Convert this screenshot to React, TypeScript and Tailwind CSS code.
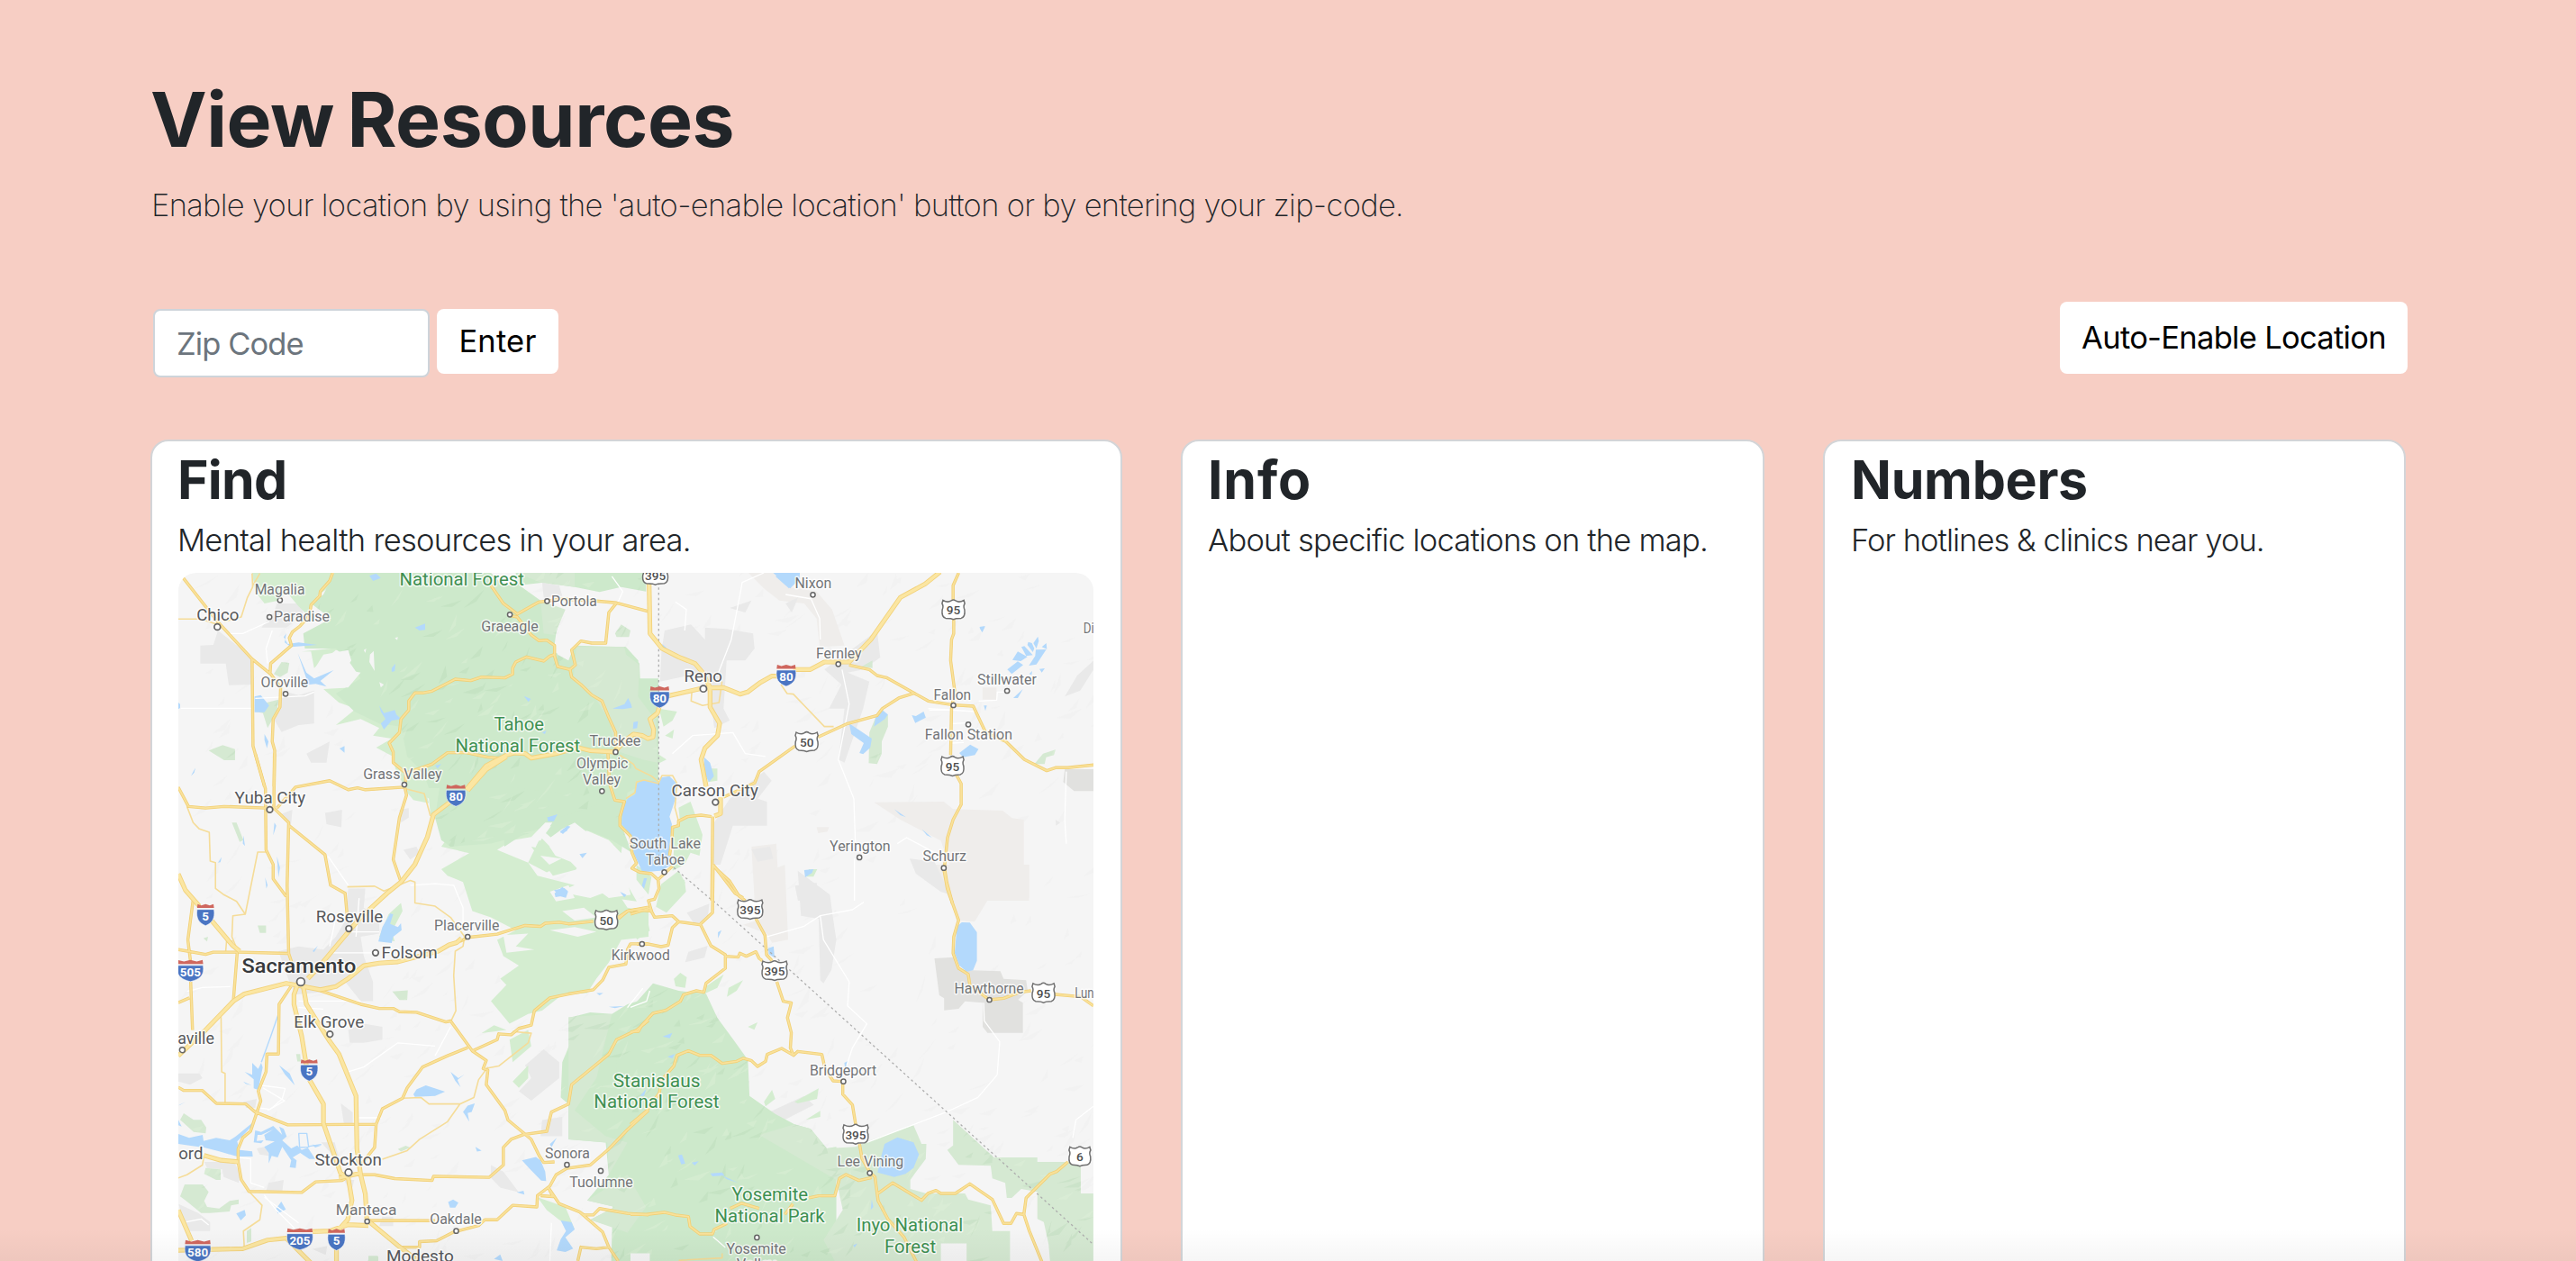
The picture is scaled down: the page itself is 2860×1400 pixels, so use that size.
import type { ReactNode } from "react";

/* Map tiles: each tile has its own local grid that is scaled onto the map. */
type Tile = "nw" | "ne" | "sw" | "se" | "c" | "f" | "d";

const TILES: Record<Tile, [number, number, number, number]> = {
  nw: [-18, -166, 0.3444, 0.3333],
  ne: [502, -36, 0.3444, 0.3333],
  sw: [-18, 204, 0.3444, 0.3571],
  se: [502, 324, 0.3571, 0.3333],
  c: [382, 4, 0.3333, 0.3333],
  f: [822, 4, 0.3333, 0.3333],
  d: [-8, 544, 0.3333, 0.3333],
};

const at = (t: Tile, x: number, y: number): [number, number] => {
  const [ox, oy, sx, sy] = TILES[t];
  return [ox + x * sx, oy + y * sy];
};

const matrix = (t: Tile) => {
  const [ox, oy, sx, sy] = TILES[t];
  return `translate(${ox} ${oy}) scale(${sx} ${sy})`;
};

type Shape = [Tile, string];

const GREEN_LIGHT: Shape[] = [
  ["nw", "M290,498 L550,498 L545,540 L500,575 L470,640 L440,610 L400,560 L375,590 L330,600 L300,560Z"],
  ["nw", "M450,760 L640,740 L750,1000 L900,1100 L880,1170 L780,1170 L745,1110 L690,1080 L740,1050 L680,1040 L700,1015 L640,985 L560,1005 L625,950 L570,930 L520,885 L610,880 L580,850 L640,830 L630,775 L560,755 L490,815 L480,760Z"],
  ["sw", "M740,0 L1600,0 L1600,150 L1500,150 L1480,300 L1440,260 L1370,230 L1300,260 L1250,200 L1220,250 L1190,250 L1130,260 L1080,290 L1180,330 L1210,370 L1330,400 L1280,420 L1380,440 L1460,410 L1500,470 L1568,480 L1568,560 L1480,570 L1440,640 L1400,690 L1370,735 L1290,740 L1225,790 L1180,800 L1120,830 L1060,760 L1110,710 L1090,690 L1150,650 L1100,620 L1080,570 L1140,540 L1060,500 L1000,480 L970,390 L920,370 L900,350 L990,300 L900,280 L930,240 L890,225 L905,190 L865,180 L860,130 L790,100 L760,60Z"],
  ["sw", "M1220,250 L1300,330 L1240,360 L1180,330Z M1190,280 L1290,300 L1340,350 L1260,370Z M1400,300 L1470,330 L1440,360 L1390,330Z M1420,380 L1500,400 L1530,450 L1450,440Z"],
  ["sw", "M780,100 L850,110 L860,145 L810,135Z M700,560 L730,490 L770,455 L775,480 L740,545 L750,575Z M1030,860 L1070,835 L1110,850Z M1120,880 L1180,850 L1190,900 L1130,950Z M1130,1010 L1180,960 L1180,1000 L1150,1030Z M1210,1370 L1300,1400 L1330,1470 L1280,1440 L1240,1410Z"],
  ["c", "M520,770 L560,750 L600,860 L590,930 L560,920 L540,960 L500,980 L505,900 L500,840 L525,815Z M455,440 L515,450 L500,480 L470,500Z M475,530 L505,510 L500,540Z M450,590 L480,610 L450,625Z M460,1030 L540,1010 L545,1050 L480,1120 L445,1100Z M380,960 L430,1000 L420,1060 L380,1010Z"],
  ["se", "M0,190 L50,170 L60,220 L20,250Z M95,65 L150,20 L170,60 L140,110 L90,140Z M135,380 L155,360 L175,375 L170,410 L140,405Z M235,405 L290,365 L270,410 L230,430Z M305,410 L350,385 L330,420 L300,440Z M365,540 L395,525 L385,550Z M415,790 L440,750 L450,780 L420,805Z M510,790 L585,745 L580,780 L520,795Z M545,850 L590,820 L590,840Z"],
  ["ne", "M240,760 L280,760 L280,800 L250,805Z M575,1095 L602,1095 L590,1120 L565,1120Z"],
];

const GREEN: Shape[] = [
  ["nw", "M555,498 L1060,498 L1100,540 L1145,535 L1220,590 L1290,625 L1270,700 L1262,760 L1330,800 L1350,745 L1495,745 L1535,790 L1535,850 L1600,850 L1600,1215 L860,1215 L840,1160 L790,1110 L770,1010 L700,1000 L620,960 L560,900 L640,850 L600,790 L560,750 L460,750 L455,700 L545,650 L480,600 L520,570Z"],
  ["nw", "M1140,498 L1560,498 L1560,560 L1480,545 L1410,562 L1330,545 L1230,530 L1145,540Z"],
  ["c", "M-60,560 L300,560 L420,540 L450,600 L440,670 L350,720 L330,830 L365,920 L300,880 L230,850 L150,830 L120,890 L60,840 L0,860 L-60,900Z"],
  ["sw", "M880,190 L900,60 L1100,-20 L1420,0 L1400,150 L1250,200 L1180,240 L1060,270 L930,280 L900,260Z"],
  ["c", "M-60,380 L-60,250 L110,300 L180,230 L340,235 L390,290 L395,420 L440,480 L445,620 L430,670 L300,740 L-60,700Z"],
  ["sw", "M1320,810 L1380,795 L1450,800 L1500,770 L1600,740 L1600,1590 L1490,1540 L1480,1470 L1380,1440 L1460,1400 L1370,1380 L1440,1300 L1430,1200 L1310,1190 L1310,1080 L1285,1060 L1290,950 L1320,880Z"],
  ["se", "M-40,510 L0,480 L70,395 L150,420 L235,430 L270,510 L325,590 L365,650 L370,770 L450,830 L510,865 L560,880 L610,945 L640,940 L640,1330 L-60,1330Z"],
];

const GREEN_GREY: Shape[] = [
  ["c", "M180,235 L340,235 L345,260 L390,295 L385,400 L445,480 L450,620 L400,610 L310,580 L290,480 L240,400 L170,340Z"],
  ["nw", "M1145,498 L1330,498 L1330,545 L1220,530Z M1460,700 L1480,670 L1510,690 L1505,712 L1465,712Z M1220,590 L1300,620 L1265,705 L1230,700Z"],
  ["se", "M400,900 L510,865 L560,880 L610,945 L700,940 L740,920 L880,868 L905,930 L920,930 L918,980 L890,1020 L870,1050 L870,1080 L920,1095 L1040,1095 L1050,1115 L1120,1135 L1125,1220 L1180,1220 L1180,1330 L640,1330 L600,1250 L660,1150 L640,1050Z"],
  ["se", "M1003,850 L1130,975 L1265,975 L1265,990 L1375,990 L1400,1005 L1400,1095 L1439,1095 L1439,1330 L1305,1330 L1300,1265 L1285,1190 L1265,1180 L1265,1090 L1215,1080 L1185,1110 L1170,1110 L1165,1060 L1125,1045 L1120,1003 L1020,1000 L985,950 L1003,935Z"],
  ["ne", "M745,420 L780,400 L780,425Z M790,590 L830,580 L830,620 L810,670 L810,710 L795,745 L768,742 L770,640Z M1302,745 L1330,710 L1370,697 L1365,715 L1340,722 L1335,745Z"],
  ["nw", "M360,835 L385,795 L410,798 L405,830 L380,845Z M300,940 L375,920 L370,960 L340,1015 L325,965 L300,960Z M150,1090 L195,1072 L235,1085 L235,1122 L200,1122Z"],
  ["sw", "M225,205 L240,205 L262,260 L250,265Z M308,525 L335,525 L335,548 L315,548Z M742,730 L792,727 L790,757 L765,757Z M133,565 L148,560 L145,575Z M432,925 L445,925 L447,948 L436,948Z"],
  ["d", "M30,190 L42,168 L75,190 L100,190 L117,215 L115,235 L75,230Z M115,350 L165,355 L165,390 L150,390 L110,370Z M30,445 L45,405 L105,405 L125,430 L110,460 L120,480 L160,485 L195,460 L225,455 L225,470 L200,475 L195,495 L130,500 L100,500 L50,460Z M252,560 L267,550 L267,595 L252,600Z M660,645 L690,645 L690,662 L655,662Z"],
  ["sw", "M760,1220 L785,1210 L800,1215 L770,1228Z M665,1552 L695,1552 L695,1568 L665,1568Z"],
  ["sw", "M1310,1190 L1310,810 L1450,800 L1400,1000 L1330,1100 L1430,1180 L1500,1200 L1440,1300 L1435,1200Z M1370,1380 L1500,1300 L1560,1400 L1500,1480 L1380,1440 L1460,1400Z"],
];

const LAND: Shape[] = [
  ["se", "M965,1262 h80 v70 h-80Z M0,1295 h60 v40 h-60Z"],
  ["nw", "M520,770 L600,755 L610,790 L590,820 L640,830 L600,880 L520,880 L560,850 L490,820Z M650,755 L658,750 L655,765Z M670,770 L682,758 L685,825 L668,795Z M750,715 L760,712 L758,722Z M700,862 L715,870 L705,880Z"],
  ["nw", "M1305,625 L1400,600 L1460,600 L1435,735 L1350,728 L1325,750 L1310,790 L1275,770 L1270,720Z"],
  ["sw", "M1190,250 L1235,205 L1258,205 L1220,260Z M1240,260 L1290,225 L1330,205 L1370,235 L1350,290 L1310,280 L1270,300Z M1350,260 L1450,270 L1480,330 L1510,430 L1440,440 L1370,390 L1320,380 L1340,340Z M1250,420 L1310,400 L1330,440 L1270,450Z M1290,480 L1360,470 L1400,500 L1330,510Z M1250,540 L1330,530 L1400,545 L1340,560Z M1100,555 L1180,550 L1140,590 L1200,600 L1110,610Z M1350,300 L1300,320 L1350,330Z"],
  ["c", "M40,880 L70,835 L95,832 L60,880Z M90,900 L150,840 L190,870 L160,950 L110,930Z M170,900 L300,910 L340,960 L360,1060 L300,1030 L280,980 L230,1000 L180,950Z M60,930 L130,940 L90,960Z"],
];

const URBAN: Shape[] = [
  ["nw", "M180,690 L290,780 L290,870 L215,872 L205,800 L123,800 L123,740 L165,738Z M385,890 L440,905 L490,890 L490,1000 L440,1005 L385,1028 L360,985 L380,950Z M370,600 L450,600 L455,640 L400,680 L320,680 L360,630Z M465,1100 L540,1060 L530,1130 L480,1130Z M1225,530 L1280,540 L1290,575 L1230,580Z"],
  ["ne", "M110,300 L195,280 L240,330 L240,290 L310,295 L395,310 L400,360 L370,400 L310,400 L300,560 L320,600 L270,625 L255,500 L230,440 L95,470 L100,370Z M320,860 L430,770 L455,800 L410,860 L440,870 L440,950 L330,950 L290,1080 L260,1080 L270,940Z M625,430 L730,350 L795,300 L805,390 L750,430 L700,440 L770,470 L750,560 L690,740 L670,730 L690,560 L640,560 L680,480Z M390,1030 L450,1020 L460,1060 L410,1070Z M530,1150 L600,1140 L605,1200 L540,1200Z M320,225 L390,200 L370,240Z"],
  ["ne", "M1400,520 L1440,450 L1493,400 L1493,430 L1450,500Z M1370,930 L1385,940 L1372,950Z M900,1060 L980,1070 L1030,1180 L1000,1170 L920,1110Z M500,210 L540,190 L520,240Z"],
  ["sw", "M375,605 L440,590 L520,600 L560,560 L590,510 L600,410 L655,410 L650,470 L700,500 L700,550 L640,560 L650,620 L680,700 L680,760 L640,760 L590,700 L540,730 L430,740 L410,700Z M380,180 L420,165 L415,215Z M525,175 L580,165 L578,220 L530,210Z M778,290 L820,280 L830,300 L800,320Z M765,165 L795,160 L795,190 L770,205Z M600,850 L650,830 L710,840 L710,880 L650,890 L605,890Z M52,985 L120,985 L130,1000 L90,1020 L52,1010Z M1170,960 L1230,910 L1280,950 L1280,1000 L1190,1070 L1150,1040 L1190,1000Z M1060,1270 L1100,1290 L1150,1355 L1090,1340 L1060,1310Z M1225,1130 L1290,1120 L1290,1180 L1220,1180Z M710,1430 L745,1430 L745,1460 L700,1460Z"],
  ["d", "M110,330 L210,330 L230,370 L225,400 L175,380 L170,355 L120,350Z M240,130 L285,120 L280,150 L250,150Z M325,400 L375,390 L370,430 L315,430Z M285,285 L320,278 L325,310 L295,305Z M565,135 L605,165 L605,205 L575,200Z M500,265 L545,265 L560,320 L540,310Z M575,390 L610,390 L600,430Z M25,470 L90,500 L130,530 L130,560 L50,560Z M470,620 L520,610 L515,640Z"],
  ["se", "M520,20 L570,60 L620,100 L630,180 L640,250 L625,350 L600,395 L590,385 L585,180 L530,170Z M175,160 L245,130 L240,180 L200,200Z M180,290 L240,270 L230,310 L170,325Z M400,830 L440,820 L540,770 L570,800 L460,860Z M320,730 L370,720 L360,760Z"],
];

const BEIGE: Shape[] = [
  ["ne", "M380,108 L460,108 L510,155 L600,170 L650,230 L690,350 L610,355 L600,260 L560,210 L480,200 L430,160Z M785,872 L1010,870 L1040,895 L1200,900 L1230,925 L1268,930 L1268,1100 L1285,1105 L1285,1200 L1060,1200 L1040,1110 L1000,1000 L870,930Z M1135,490 h45 v40 h-45Z M390,1020 L470,1010 L480,1190 L400,1200Z M600,955 L640,955 L635,970 L605,975Z"],
  ["se", "M905,0 L1240,0 L1240,110 L1115,110 L1070,190 L1020,185 L980,90 L920,50Z M410,30 L480,0 L490,250 L440,260 L425,230 L350,200 L410,180Z"],
];

const BASE_GREY: Shape[] = [
  ["se", "M945,312 L1005,308 L1020,350 L1150,355 L1160,380 L1230,385 L1235,420 L1205,450 L1220,460 L1220,560 L1110,560 L1095,540 L1095,460 L1040,455 L1020,480 L975,485 L975,445 L960,435Z"],
  ["ne", "M1400,762 L1493,762 L1493,835 L1430,835 L1395,805Z"],
];

const WATER: Shape[] = [
  ["c", "M380,690 L400,678 L440,682 L455,690 L462,670 L490,665 L515,690 L510,740 L490,800 L498,825 L490,900 L500,960 L460,980 L400,985 L370,920 L365,870 L330,825 L335,770 L350,740 L375,725Z M605,602 L625,620 L638,665 L622,685 L608,660Z M300,440 L340,425 L352,405 L362,425 L365,437 L335,442Z M370,485 L385,482 L382,505 L368,508Z M465,225 L480,238 L470,245Z M5,398 L28,408 L20,418Z M65,520 L80,513 L75,525Z M83,803 L115,793 L105,815 L85,815Z M125,850 L150,830 L160,833 L135,858Z M190,925 L215,920 L200,938Z M105,1045 L140,1038 L152,1050 L145,1070 L125,1065Z M325,1050 L345,1060 L340,1068Z M405,1005 L415,1005 L405,1040 L398,1030Z"],
  ["c", "M843,0 L900,-30 L900,25 L888,40Z"],
  ["ne", "M460,108 L546,108 L545,128 L515,160Z M705,610 L735,630 L778,660 L773,690 L750,712 L738,708 L752,675 L712,645Z M785,620 L790,590 L812,565 L830,580 L820,595Z M907,582 L920,585 L945,570 L952,590 L918,608Z M1060,708 L1095,680 L1122,695 L1110,715 L1072,722Z M1125,288 L1143,285 L1133,305Z M560,1098 L590,1095 L585,1108 L563,1122Z M850,895 L888,922 L870,915Z M940,962 L972,990 L955,982Z"],
  ["f", "M295,310 L330,283 L348,295 L310,325Z M312,278 L330,250 L362,268 L340,282Z M342,235 L352,232 L380,262 L358,265Z M365,218 L377,222 L385,240 L380,252 L362,228Z M382,222 L397,200 L400,215 L392,240Z M390,244 L425,243 L392,293 L367,297 L388,265Z M410,235 L425,222 L427,242Z M402,308 L420,306 L410,320Z M368,325 L378,315 L376,328Z M315,405 L347,375 L330,405Z M217,430 L227,430 L222,448Z M203,172 L221,167 L212,186Z"],
  ["nw", "M437,765 L465,830 L490,850 L553,822 L510,858 L530,877 L495,868 L455,872 L465,850Z M400,700 L395,730 L415,745 L500,738 L440,730 L405,735 L392,712Z M298,910 L318,905 L345,940 L330,962 L298,962Z M700,940 L715,965 L750,955 L755,970 L770,985 L740,990 L715,1020 L705,1000 L720,985 L705,960Z M740,815 L752,800 L750,825 L740,828Z M815,680 L848,667 L848,688 L830,690Z M668,508 L690,500 L705,515 L680,525Z M572,1083 L588,1075 L588,1097Z M330,1035 L343,1060 L338,1082 L330,1055Z M95,1172 L108,1148 L102,1165Z M52,930 L58,935 L58,948 L52,952Z M880,1140 L900,1135 L888,1150Z"],
  ["sw", "M697,575 L710,530 L735,488 L745,490 L735,520 L760,530 L770,518 L772,540 L745,560 L740,580Z M810,1050 L820,1035 L850,1022 L890,1035 L912,1042 L880,1055 L815,1058Z M930,980 L955,1000 L975,988 L952,1005 L962,1028 L945,1008Z M970,1105 L985,1085 L1008,1078 L998,1105 L985,1108 L990,1135 L975,1112Z M1160,1255 L1205,1245 L1220,1255 L1235,1290 L1238,1320 L1222,1318 L1188,1285Z M1285,1442 L1320,1448 L1330,1470 L1300,1495 L1325,1530 L1300,1540 L1272,1535 L1285,1500 L1302,1475Z M1010,1213 L1030,1225 L1015,1228Z M1143,1355 L1165,1350 L1168,1362Z M922,1385 L938,1377 L955,1387 L945,1402 L928,1402Z M1265,425 L1290,405 L1308,418 L1300,432 L1268,437Z M1240,190 L1275,180 L1262,198Z M1283,238 L1310,215 L1305,232Z M1400,735 L1422,735 L1410,742Z M1070,1562 L1090,1548 L1098,1568Z M1440,778 L1490,776 L1460,782Z M180,330 L192,312 L188,328Z M332,375 L340,400 L336,410Z M370,310 L380,345 L375,375Z M362,205 L368,215 L358,245Z M262,245 L267,278 L260,270Z M93,60 L107,35 L103,50Z M485,605 L502,588 L490,608Z M1250,1205 L1272,1185 L1255,1215Z M1480,425 L1497,430 L1490,437Z"],
  ["d", "M270,0 L290,20 L300,0 L305,15 L290,90 L275,85 L275,55 L245,30 L270,40Z M240,62 L268,75 L248,70Z M360,8 L395,35 L412,75 L380,40Z M24,237 L60,250 L105,240 L108,260 L150,250 L195,258 L215,245 L270,200 L272,208 L220,262 L228,290 L270,295 L272,312 L220,312 L160,295 L110,282 L60,275 L24,270Z M24,190 L35,212 L24,208Z M24,142 L48,130 L30,140Z M275,265 L280,225 L300,230 L340,210 L370,240 L360,212 L375,220 L385,245 L370,258 L400,285 L420,275 L435,290 L455,282 L480,320 L460,320 L430,300 L405,315 L418,325 L415,350 L395,348 L400,325 L370,280 L355,315 L335,310 L325,335 L325,300 L310,280 L345,262 L315,258 L310,240 L340,222 L300,240 L288,240 L285,260 L308,258 L300,268Z M350,485 L367,462 L382,488 L355,502Z M217,502 L245,490 L249,508 L232,525Z M470,272 L500,275 L480,282Z"],
  ["se", "M768,1025 L775,990 L790,930 L830,908 L880,925 L897,965 L880,1010 L855,1030 L820,1040Z M1015,205 L1030,192 L1055,193 L1077,225 L1077,320 L1065,352 L1045,356 L1022,335 L1008,295Z M428,278 L445,272 L448,310 L430,298Z M100,572 L130,560 L122,578Z M115,640 L138,630 L130,645Z M30,770 L50,745 L42,770Z M148,968 L160,965 L170,995 L158,998Z M190,992 L212,988 L200,1002Z M248,1028 L285,1025 L292,1035 L255,1038Z M750,1115 L755,1140 L747,1150Z M692,1268 L705,1262 L697,1275Z M665,660 L675,655 L668,690Z M272,225 L283,218 L272,245Z M285,1035 L335,1060 L300,1048Z"],
];

const CANALS: Shape[] = [
  ["d", "M425,235 L452,235 L458,280 L428,282Z M460,278 L500,272"],
  ["sw", "M375,800 L350,870 L320,950"],
];

const LOCAL_ROADS: Shape[] = [
  ["nw", "M60,949 L290,949 M300,916 L460,908 L490,895 M220,700 L260,700 L345,660 M355,690 L335,750 L340,800 M1450,510 L1485,560 L1470,595"],
  ["ne", "M580,190 L610,260 L612,330 M682,430 L705,545 L670,730 L720,860 L725,1010 M722,1060 L722,1200 M860,1010 L890,990 L980,1040 M500,180 L585,195 M145,205 L180,230 L175,300 M355,170 L360,140 L430,108 M355,170 L325,330 L280,450 M135,710 L200,650 L330,640 L370,710 L435,720 M960,560 L1110,570 M1405,770 L1400,930 L1405,1010"],
  ["sw", "M600,980 L650,965 L760,890 L880,900 M930,840 L880,930 M590,545 L700,545 M540,610 L680,610 M540,590 L560,500 M635,440 L625,560 M640,760 L440,760 M440,780 L520,785 M80,730 L130,718 L220,715 M325,1030 L395,1070 L340,1100 M800,400 L880,395 L940,400 L970,470 L970,540 M535,310 L600,400 M330,1370 L440,1450 M1255,1450 L1250,1568 M1550,720 L1500,780"],
  ["d", "M300,75 L380,85 L370,120 L330,155 L290,150 M225,315 L265,320 L265,400 L310,415 M625,183 L700,183 M310,440 L350,490 L410,550 M50,530 L100,520 L125,540"],
  ["se", "M735,925 L980,825 L1080,775 L1140,700 L1148,590 L1100,520 L1098,460 M425,240 L540,205 L590,170 L690,150 L725,125 M590,170 L600,250 L680,390 L675,470 L735,530 L690,610 L672,670 M0,475 L50,455 L60,420 M1439,805 L1385,850 L1375,910 M257,1240 L295,1275"],
  ["f", "M35,445 L110,445 M110,490 L160,488 M200,415 L260,412 L262,385 L300,385 M110,555 L150,553"],
];

const MINOR: Shape[] = [
  ["nw", "M200,660 L255,645 L275,580 L292,545 L290,500 M290,545 L315,500 M52,652 L125,652 L178,670"],
  ["ne", "M485,480 L505,510 L525,512 L560,550 L625,620 L655,620"],
  ["c", "M565,375 L562,415 L600,430 L655,420 L665,350 M325,595 L370,625 L378,640 L430,665 L455,685 L465,663 L500,663 L515,690 L508,770 L520,815 M345,740 L375,720 L380,685 L405,678 L455,690"],
  ["sw", "M80,155 L100,205 L120,225 L152,235 L155,325 L172,330 L172,410 L200,430 L240,450 L268,490 L228,495 L225,560 L242,600 M335,297 L308,297 L268,490 M597,405 L685,403 L715,418 L800,385 L815,390 L815,455 L880,465 L930,500 L975,560 L970,590 L945,605 L940,680 L947,790 L930,825 M190,810 L192,980 L203,985 L203,1075 M775,1062 L835,1060 L860,1080 L960,1080 L1005,1060 L1020,1005 L1050,965 M960,1080 L920,1135 L830,1190 L790,1225 L710,1252 M1050,968 L1085,962 L1180,890 L1190,860 L1130,855 M280,1352 L322,1395 L315,1440 L262,1475 L265,1528 M52,1310 L80,1300 L130,1270 L135,1240 M785,100 L845,115 L865,185 M205,605 L208,570 L228,575"],
  ["se", "M150,1318 L285,1310 L285,1295"],
];

const MAJOR: Shape[] = [
  ["nw", "M68,515 L178,660 L290,785 L350,835 L382,880 L380,945 L358,985 L355,1060 L363,1090 L361,1210 M290,785 L293,1075 L330,1210 M550,498 L540,525 L510,560 L508,575 L480,605 L475,640 L445,675 L420,695 L410,715 L417,740 L350,800 L348,830 M1060,540 L1100,600 L1145,635 L1215,595 L1290,585 L1400,592 L1465,598 L1568,627 M1465,598 L1440,630 L1430,732 L1385,732 L1350,725 L1320,755 L1332,805 L1315,820 L1275,810 L1265,775 L1265,740 L1240,722 L1215,724 L1190,705 L1145,645 L1120,640 M1265,770 L1250,775 L1230,792 L1175,778 L1140,795 L1130,815 L1130,835 L1105,848 L1030,845 L995,857 L945,852 L870,892 L840,898 L815,898 L795,925 L795,955 L770,985 L765,1030 L732,1065 L745,1095 L745,1130 L785,1165 L785,1195 M1315,820 L1320,845 L1350,870 L1385,905 L1418,925 L1440,980 L1462,1030 L1462,1090 M785,1165 L870,1135 L920,1097 L980,1097 L1050,1112 L1090,1115"],
  ["ne", "M300,855 L400,808 L415,770 L530,685 M605,655 L700,610 L795,583 L812,560 L865,525 L912,510 M705,415 L770,430 L795,450 L825,457 L960,535 L1040,548 L1105,552 L1145,640 L1210,670 L1270,730 L1342,767 L1370,757 L1410,757 L1493,748 M1058,108 L1040,150 L1040,200 M1042,262 L1042,310 L1035,330 L1032,400 L1045,500 L1035,560 L1032,715 M1050,780 L1066,810 L1066,880 L1040,930 L1022,990 L1012,1090 L1020,1140 L1038,1210 M265,920 L262,1200 M262,1080 L320,1135 L350,1185 L370,1200"],
  ["c", "M630,800 L595,795 L550,800 L520,815 L520,830 L500,835 L498,880 L490,930 M285,590 L290,690 L308,745 L340,750 L325,800 L325,830 L360,865 L365,920 L380,955 L365,972 L390,985 L430,990 L452,1010 L455,1040 L440,1075 L420,1080 L430,1115 L380,1110 L350,1115 L320,1140 M452,1010 L500,965"],
  ["sw", "M100,445 L83,570 L92,640 M92,700 L98,850 M52,600 L140,615 L165,608 L250,608 L405,612 M230,755 L242,610 M52,765 L88,750 M52,95 L85,155 L140,160 L200,155 L335,160 M370,160 L430,95 L540,75 L600,103 L630,97 L655,103 L780,95 M300,-10 L333,100 L335,290 L358,335 L358,380 L400,435 M362,-10 L360,160 L408,205 L403,400 L408,612 L425,660 M410,215 L525,305 L543,400 L590,425 L597,500 M770,390 L745,320 L765,190 L788,120 L780,85 M960,575 L985,562 L1080,552 L1170,525 L1220,528 L1235,518 L1280,515 L1310,520 L1390,512 M1470,500 L1500,480 L1568,468 M510,728 L640,770 L700,783 L745,783 L765,793 L820,795 L915,825 L930,822 L1000,915 L1045,945 L1035,970 L1050,975 L1045,1020 L1105,1100 L1115,1130 L1165,1170 L1190,1190 L1215,1240 L1230,1262 L1265,1260 M415,715 L377,770 L375,925 L338,925 L335,980 L310,1040 L318,1070 L285,1165 L260,1185 L245,1220 L245,1260 L255,1315 L280,1352 L450,1355 L495,1322 L580,1318 L610,1300 L685,1300 L750,1312 L870,1318 L875,1305 L1055,1308 L1100,1270 L1100,1215 L1125,1190 L1165,1175 L1240,1165 L1255,1105 L1310,1080 L1320,1020 L1440,925 L1465,880 L1530,850 L1568,820 M52,1028 L70,1038 L130,1038 L175,1078 L270,1080 L300,1105 L405,1145 L690,1143 L710,1095 L775,1062 L790,1030 L840,965 L920,930 L985,905 M1000,915 L1080,880 L1085,862 L1125,865 L1150,845 L1190,835 L1200,790 L1250,750 L1310,738 L1390,725 L1420,695 L1440,655 L1495,645 L1500,600 L1510,582 L1568,582 M690,1143 L685,1215 L640,1270 M1568,1100 L1500,1160 L1440,1220 L1380,1270 L1305,1280 L1270,1300 L1250,1335 L1210,1365 L1208,1400 L1130,1395 L1080,1440 L1040,1440 L1020,1458 L940,1478 L885,1505 L830,1508 L830,1525 L760,1525 M660,1442 L880,1443 M1220,1365 L1260,1368 L1245,1340 L1280,1390 L1345,1415 L1420,1478 L1440,1525 L1400,1530 L1350,1525 L1340,1568 M1345,1415 L1360,1425 L1390,1425 L1410,1405 L1500,1420 L1568,1425 M1440,1525 L1470,1568"],
  ["se", "M0,165 L60,145 L75,175 L130,170 L150,190 L215,200 L255,160 L257,0 M257,0 L325,95 L350,110 M390,180 L418,235 L423,300 L440,320 M455,390 L475,455 L500,460 L488,510 L500,560 L497,610 L507,635 L520,622 L595,632 L605,680 L630,720 L660,722 L660,765 L690,800 L700,865 M712,930 L720,980 L745,1025 L760,1040 L770,1120 L800,1180 L850,1240 L890,1325 M20,265 L60,265 L95,273 L117,268 L130,210 L150,190 M218,200 L250,270 L295,300 L295,345 L235,395 L228,425 L205,420 L165,433 L155,455 L110,485 L70,495 L35,535 L25,555 L0,557 M295,305 L335,308 L340,295 L360,305 L390,290 L400,312 L410,320 M507,635 L470,612 L425,632 L420,655 L395,672 L375,652 L350,645 L330,655 L285,662 L250,635 L215,635 L180,620 L145,635 L135,670 L95,720 L90,760 L50,820 L0,865 M555,1110 L585,1103 L635,1103 L650,1045 L670,1032 L710,1052 L750,1042 M770,1095 L815,1060 L905,1118 L925,1095 L950,1085 L965,1095 L1010,1095 L1055,1063 L1125,1115 L1160,1195 L1183,1195 L1200,1162 L1223,1165 M1360,990 L1325,1022 L1305,1030 L1230,1110 L1223,1165 L1240,1220 L1280,1325 M0,1165 L50,1165 L105,1158 L140,1167 L180,1172 L185,1205 L215,1230 L255,1230 L260,1215 L300,1195 M310,1145 L345,1128 L400,1145 M480,1165 L505,1130 M975,20 L985,80 L1020,185 L1005,240 L1003,295 L1020,345 L1050,365 L1055,400 L1115,450 L1160,445 L1210,425 L1245,420 M1320,432 L1400,440 L1439,470"],
];

const INTERSTATE: Shape[] = [
  ["nw", "M980,1220 L1045,1140 L1110,1105 L1135,1098 L1170,1100 L1190,1115 L1270,1100 L1340,1080 L1380,1090 L1462,1095 L1480,1060"],
  ["c", "M300,590 L345,545 L370,525 L400,530 L418,540 L435,535 L437,510 L425,475 L450,455 L457,430 M485,398 L600,372 L670,370 L725,392 L750,385 L790,355 L830,332 L850,332 M422,20 L425,190 L465,240 L520,268 L575,290 L600,320 L625,370 L625,435 L657,490 L650,530 L608,572 L595,610 L612,700 M660,735 L660,790 L640,798"],
  ["ne", "M525,430 L580,430 L625,405 L705,405 L775,330 L870,190 L950,145 L998,105"],
  ["sw", "M52,365 L75,415 L120,465 M160,510 L225,585 L250,605 M52,930 L140,850 L230,760 L265,738 L400,705 L440,712 L510,725 L560,715 L600,690 L650,650 L700,642 L760,638 L890,605 L925,585 L950,578 L965,565 M440,700 L425,740 L425,770 L450,870 L465,960 M475,1005 L520,1080 L520,1140 L575,1295 L600,1310 L612,1380 L598,1440 L565,1475 M455,715 L465,770 L540,885 L570,925 L625,1055 L628,1220 L640,1300 L655,1360 L660,1440 L760,1520 L825,1568 M470,690 L500,660 L600,545 L640,500 L725,425 L770,390 L815,335 L855,250 L875,180 L930,140 M985,105 L1045,40 L1110,0 M135,1240 L190,1255 L245,1260 M52,1410 L95,1505 M52,1535 L260,1530 L340,1503 L400,1497 L480,1575 M485,1477 L540,1475 L600,1455 L665,1458 M562,1520 L562,1575 M570,1310 L640,1295"],
];

const BORDERS: Shape[] = [
  ["c", "M454,20 L454,930"],
  ["ne", "M140,1090 L262,1198"],
  ["se", "M257,120 L1439,1265"],
];

type Kind = "town" | "city" | "capital" | "park";
const LABEL_STYLE: Record<Kind, { size: number; fill: string; weight: number }> = {
  town: { size: 16, fill: "#737578", weight: 400 },
  city: { size: 19, fill: "#56585b", weight: 400 },
  capital: { size: 22.5, fill: "#37393c", weight: 500 },
  park: { size: 19.5, fill: "#3f9052", weight: 400 },
};

/* tile, left, right, baseline, text, kind */
const LABELS: [Tile, number, number, number, string, Kind][] = [
  ["nw", 765, 1167, 540, "National Forest", "park"],
  ["nw", 298, 460, 570, "Magalia", "town"],
  ["nw", 360, 540, 660, "Paradise", "town"],
  ["nw", 111, 248, 656, "Chico", "city"],
  ["nw", 318, 471, 880, "Oroville", "town"],
  ["nw", 1254, 1402, 608, "Portola", "town"],
  ["nw", 1029, 1213, 692, "Graeagle", "town"],
  ["nw", 1070, 1231, 1024, "Tahoe", "park"],
  ["nw", 945, 1348, 1094, "National Forest", "park"],
  ["nw", 1378, 1543, 1073, "Truckee", "town"],
  ["nw", 648, 902, 1186, "Grass Valley", "town"],
  ["c", 180, 352, 640, "Olympic", "town"],
  ["c", 201, 327, 693, "Valley", "town"],
  ["ne", 530, 648, 160, "Nixon", "town"],
  ["ne", 598, 745, 393, "Fernley", "town"],
  ["ne", 173, 296, 471, "Reno", "city"],
  ["ne", 1118, 1309, 481, "Stillwater", "town"],
  ["ne", 977, 1098, 530, "Fallon", "town"],
  ["ne", 949, 1231, 664, "Fallon Station", "town"],
  ["ne", 132, 412, 851, "Carson City", "city"],
  ["c", 357, 594, 905, "South Lake", "town"],
  ["c", 411, 540, 961, "Tahoe", "town"],
  ["ne", 642, 838, 1034, "Yerington", "town"],
  ["ne", 942, 1083, 1069, "Schurz", "town"],
  ["ne", 1460, 1495, 308, "Di", "town"],
  ["sw", 234, 462, 146, "Yuba City", "city"],
  ["sw", 496, 712, 516, "Roseville", "city"],
  ["sw", 877, 1087, 540, "Placerville", "town"],
  ["sw", 707, 888, 627, "Folsom", "city"],
  ["sw", 257, 625, 672, "Sacramento", "capital"],
  ["sw", 425, 651, 843, "Elk Grove", "city"],
  ["sw", 50, 168, 893, "aville", "city"],
  ["sw", 53, 132, 1252, "ord", "city"],
  ["sw", 492, 708, 1270, "Stockton", "city"],
  ["sw", 560, 756, 1426, "Manteca", "town"],
  ["sw", 863, 1030, 1454, "Oakdale", "town"],
  ["sw", 723, 940, 1571, "Modesto", "city"],
  ["sw", 1234, 1379, 1250, "Sonora", "town"],
  ["sw", 1313, 1518, 1338, "Tuolumne", "town"],
  ["sw", 1448, 1637, 633, "Kirkwood", "town"],
  ["se", -54, 217, 741, "Stanislaus", "park"],
  ["se", -114, 276, 811, "National Forest", "park"],
  ["se", 557, 765, 702, "Bridgeport", "town"],
  ["se", 643, 849, 1005, "Lee Vining", "town"],
  ["se", 1007, 1223, 428, "Hawthorne", "town"],
  ["se", 1381, 1441, 445, "Lun", "town"],
  ["se", 315, 552, 1120, "Yosemite", "park"],
  ["se", 262, 604, 1190, "National Park", "park"],
  ["se", 702, 1034, 1222, "Inyo National", "park"],
  ["se", 790, 950, 1293, "Forest", "park"],
  ["se", 298, 484, 1296, "Yosemite", "town"],
  ["se", 330, 452, 1347, "Valley", "town"],
];

const DOTS: [Tile, number, number, number][] = [
  ["nw", 380, 589, 2.6], ["nw", 346, 645, 2.6], ["nw", 178, 678, 3.4], ["nw", 398, 901, 2.6],
  ["nw", 1121, 637, 2.6], ["nw", 1241, 592, 2.6], ["nw", 1462, 1095, 2.6], ["c", 265, 715, 2.6],
  ["ne", 588, 181, 2.6], ["ne", 670, 412, 2.6], ["ne", 235, 494, 3.6], ["ne", 1214, 501, 2.6],
  ["ne", 1041, 549, 2.6], ["ne", 1089, 613, 2.6], ["ne", 274, 872, 3.3], ["ne", 109, 1105, 2.6],
  ["ne", 738, 1056, 2.6], ["ne", 1010, 1091, 2.6],
  ["sw", 781, 87, 2.6], ["sw", 347, 165, 3.3], ["sw", 602, 535, 3.3], ["sw", 985, 560, 2.6],
  ["sw", 688, 610, 3.3], ["sw", 447, 700, 4.4], ["sw", 541, 863, 3.3], ["sw", 65, 912, 3],
  ["sw", 601, 1293, 3.8], ["sw", 661, 1445, 2.6], ["sw", 948, 1475, 2.6], ["sw", 1305, 1269, 2.6],
  ["sw", 1414, 1288, 2.6], ["se", 36, 264, 2.6], ["se", 662, 722, 2.6], ["se", 744, 1027, 2.6],
  ["se", 1116, 450, 2.6], ["se", 393, 1242, 2.6],
];

const INTERSTATE_SHIELDS: [Tile, number, number, string][] = [
  ["ne", 502, 450, "80"], ["ne", 94, 522, "80"], ["sw", 947, 121, "80"], ["sw", 140, 492, "5"],
  ["sw", 91, 666, "505"], ["sw", 474, 975, "5"], ["sw", 444, 1500, "205"], ["sw", 562, 1502, "5"],
  ["sw", 115, 1537, "580"],
];

const US_SHIELDS: [Tile, number, number, string][] = [
  ["ne", 80, 115, "395"], ["ne", 1041, 231, "95"], ["ne", 568, 671, "50"], ["ne", 1038, 752, "95"],
  ["sw", 1432, 508, "50"], ["se", 372, 149, "395"], ["se", 448, 353, "395"], ["se", 700, 898, "395"],
  ["se", 1284, 427, "95"], ["se", 1397, 972, "6"],
];

/* Relief shading: small facets scattered over the forests from a fixed seed. */
function facets(count: number) {
  let seed = 7;
  const next = () => {
    seed = (seed * 16807) % 2147483647;
    return seed / 2147483647;
  };
  const dark: string[] = [];
  const light: string[] = [];
  for (let i = 0; i < count; i++) {
    const x = next() * 1016;
    const y = next() * 770;
    const a = -0.7 + (next() - 0.5) * 1.1;
    const len = 8 + next() * 24;
    const w = 1.5 + next() * 5;
    const ex = x + Math.cos(a) * len;
    const ey = y + Math.sin(a) * len;
    const mx = (x + ex) / 2 + Math.sin(a) * -w;
    const my = (y + ey) / 2 + Math.cos(a) * w;
    const d = `M${x.toFixed(1)},${y.toFixed(1)}L${ex.toFixed(1)},${ey.toFixed(1)}L${mx.toFixed(1)},${my.toFixed(1)}Z`;
    (i % 2 ? dark : light).push(d);
  }
  return { dark: dark.join(""), light: light.join("") };
}
const RELIEF = facets(1300);

function Areas({ shapes, fill }: { shapes: Shape[]; fill: string }) {
  return (
    <>
      {shapes.map(([t, d], i) => (
        <path key={i} d={d} fill={fill} transform={matrix(t)} />
      ))}
    </>
  );
}

function Lines({ shapes, stroke, width, dash }: { shapes: Shape[]; stroke: string; width: number; dash?: string }) {
  return (
    <>
      {shapes.map(([t, d], i) => (
        <path
          key={i}
          d={d}
          fill="none"
          stroke={stroke}
          strokeWidth={width}
          strokeDasharray={dash}
          strokeLinejoin="round"
          transform={matrix(t)}
          vectorEffect="non-scaling-stroke"
        />
      ))}
    </>
  );
}

function InterstateShield({ x, y, text }: { x: number; y: number; text: string }) {
  const k = text.length === 3 ? 14.2 : text.length === 2 ? 10.6 : 9.4;
  return (
    <g transform={`translate(${x} ${y})`}>
      <path
        d={`M${-k},-6 H${k} C${k + 1.4},4 ${k - 2},9 0,12 C${-k + 2},9 ${-k - 1.4},4 ${-k},-6Z`}
        fill="#4a75c3"
        stroke="#fff"
        strokeOpacity={0.7}
        strokeWidth={0.8}
      />
      <path
        d={`M${-k},-7.6 L${-k + 0.6},-12 L${-k / 2},-10.4 L0,-12 L${k / 2},-10.4 L${k - 0.6},-12 L${k},-7.6Z`}
        fill="#cf675e"
      />
      <text y={6} textAnchor="middle" fill="#fff" fontSize={13.4} fontWeight={700} fontFamily="Roboto, sans-serif">
        {text}
      </text>
    </g>
  );
}

function UsShield({ x, y, text }: { x: number; y: number; text: string }) {
  const k = text.length === 3 ? 14 : text.length === 2 ? 12.6 : 12;
  return (
    <g transform={`translate(${x} ${y})`}>
      <path
        d={`M${-k + 1},-10.5 Q${-k / 2},-7.5 ${-2.5},-10 Q0,-12 2.5,-10 Q${k / 2},-7.5 ${k - 1},-10.5 L${k},-7 Q${k - 2},-4 ${k - 0.2},0 Q${k + 0.8},8 ${k - 4},9.4 L3,9.8 L0,10.8 L-3,9.8 L${-k + 4},9.4 Q${-k - 0.8},8 ${-k + 0.2},0 Q${-k + 2},-4 ${-k},-7Z`}
        fill="#fff"
        stroke="#707070"
        strokeWidth={1.5}
      />
      <text y={5.2} textAnchor="middle" fill="#4d4d4d" fontSize={13.6} fontWeight={500} fontFamily="Roboto, sans-serif">
        {text}
      </text>
    </g>
  );
}

function ResourceMap() {
  return (
    <svg className="block h-[764px] w-full rounded-t-[20px]" viewBox="0 0 1016 764" preserveAspectRatio="xMinYMin slice">
      <defs>
        <clipPath id="forests">
          {[...GREEN, ...GREEN_GREY].map(([t, d], i) => (
            <path key={i} d={d} transform={matrix(t)} />
          ))}
        </clipPath>
      </defs>
      <rect width="1016" height="764" fill="#f5f5f5" />
      <path d={RELIEF.dark} fill="#e4e4e4" opacity={0.16} />
      <Areas shapes={BEIGE} fill="#efedeb" />
      <Areas shapes={URBAN} fill="#e9e9e9" />
      <Areas shapes={BASE_GREY} fill="#e1e1df" />
      <Areas shapes={GREEN_LIGHT} fill="#d4edd0" />
      <Areas shapes={GREEN} fill="#cde9cb" />
      <Areas shapes={GREEN_GREY} fill="#d5e9d2" />
      <g clipPath="url(#forests)">
        <path d={RELIEF.dark} fill="#a9cfa8" opacity={0.22} />
        <path d={RELIEF.light} fill="#e2f4dd" opacity={0.32} />
      </g>
      <Areas shapes={LAND} fill="#f5f5f5" />
      <Areas shapes={WATER} fill="#b3d9fc" />
      <Lines shapes={CANALS} stroke="#b3d9fc" width={1.4} />
      <Lines shapes={LOCAL_ROADS} stroke="#ffffff" width={1.3} />
      <Lines shapes={BORDERS} stroke="#adadad" width={1.3} dash="2.5 3.2" />
      <Lines shapes={MINOR} stroke="#f5dc98" width={1.6} />
      <Lines shapes={MAJOR} stroke="#f1cf74" width={3.4} />
      <Lines shapes={MAJOR} stroke="#f9e19a" width={1.8} />
      <Lines shapes={INTERSTATE} stroke="#f2d27c" width={5.2} />
      <Lines shapes={INTERSTATE} stroke="#fbe6a2" width={3.4} />
      {DOTS.map(([t, x, y, r], i) => {
        const [cx, cy] = at(t, x, y);
        return <circle key={i} cx={cx} cy={cy} r={r} fill="#fff" stroke="#666" strokeWidth={r > 3 ? 1.7 : 1.5} />;
      })}
      {INTERSTATE_SHIELDS.map(([t, x, y, text], i) => {
        const [cx, cy] = at(t, x, y);
        return <InterstateShield key={i} x={cx} y={cy} text={text} />;
      })}
      {US_SHIELDS.map(([t, x, y, text], i) => {
        const [cx, cy] = at(t, x, y);
        return <UsShield key={i} x={cx} y={cy} text={text} />;
      })}
      {LABELS.map(([t, left, right, base, text, kind], i) => {
        const [x, y] = at(t, left, base);
        const [end] = at(t, right, base);
        const s = LABEL_STYLE[kind];
        return (
          <text
            key={i}
            x={x}
            y={y}
            textLength={end - x}
            lengthAdjust="spacingAndGlyphs"
            fill={s.fill}
            fontSize={s.size}
            fontWeight={s.weight}
            fontFamily="Roboto, sans-serif"
            stroke="#fff"
            strokeOpacity={0.75}
            strokeWidth={3}
            strokeLinejoin="round"
            paintOrder="stroke"
          >
            {text}
          </text>
        );
      })}
    </svg>
  );
}

function Card({ title, children, className }: { title: ReactNode; children: ReactNode; className: string }) {
  return (
    <section
      className={`h-[1100px] shrink-0 rounded-[20px] border-2 border-[#d3d5d8] bg-white px-[28px] pt-[13px] ${className}`}
    >
      <h2 className="text-[59px] leading-[60px] font-bold">{title}</h2>
      {children}
    </section>
  );
}

export default function App() {
  return (
    <div className="relative h-[1400px] w-[2860px] overflow-hidden bg-[#f7cec4] px-[167px] pt-[83px] font-['Inter',sans-serif] text-[34.5px] leading-[52px] text-[#212529]">
      <h1 className="text-[84px] leading-[100px] font-bold tracking-[-0.45px] [word-spacing:-5px]">View Resources</h1>
      <p className="mt-[19px] ml-px font-extralight tracking-[-0.69px]">
        Enable your location by using the 'auto-enable location' button or by entering your zip-code.
      </p>

      <div className="mt-[81px] flex h-[84px] items-start justify-between pr-[20px]">
        <form className="flex items-start gap-[8px] pt-[8px] pl-[3px]">
          <input
            placeholder="Zip Code"
            className="h-[76px] w-[307px] rounded-[8px] border-2 border-[#ced4da] bg-white px-[24px] tracking-[-0.9px] placeholder:text-[#6c757d]"
          />
          <button type="button" className="h-[72px] w-[135px] rounded-[8px] bg-white font-[430] tracking-[0.2px] text-black">
            Enter
          </button>
        </form>
        <button
          type="button"
          className="h-[80px] w-[386px] rounded-[8px] bg-white font-[430] tracking-[-0.7px] whitespace-nowrap text-black"
        >
          Auto-Enable Location
        </button>
      </div>

      <div className="mt-[69px] flex">
        <Card title={<span className="tracking-[-0.8px]">Find</span>} className="mr-[65px] w-[1079px]">
          <p className="mt-[11px] font-light tracking-[-0.69px]">Mental health resources in your area.</p>
          <div className="mt-[10px] ml-px w-[1016px]">
            <ResourceMap />
          </div>
        </Card>
        <Card title={<span className="tracking-[0.8px]">Info</span>} className="mr-[65px] w-[648px]">
          <p className="mt-[11px] font-light tracking-[-0.8px]">About specific locations on the map.</p>
        </Card>
        <Card title={<span className="ml-px tracking-[-0.3px]">Numbers</span>} className="w-[647px]">
          <p className="mt-[11px] ml-px font-light tracking-[-0.95px]">For hotlines &amp; clinics near you.</p>
        </Card>
      </div>

      <div className="absolute inset-x-0 bottom-0 h-[36px] bg-linear-to-b from-black/0 to-black/[0.035]" />
    </div>
  );
}
